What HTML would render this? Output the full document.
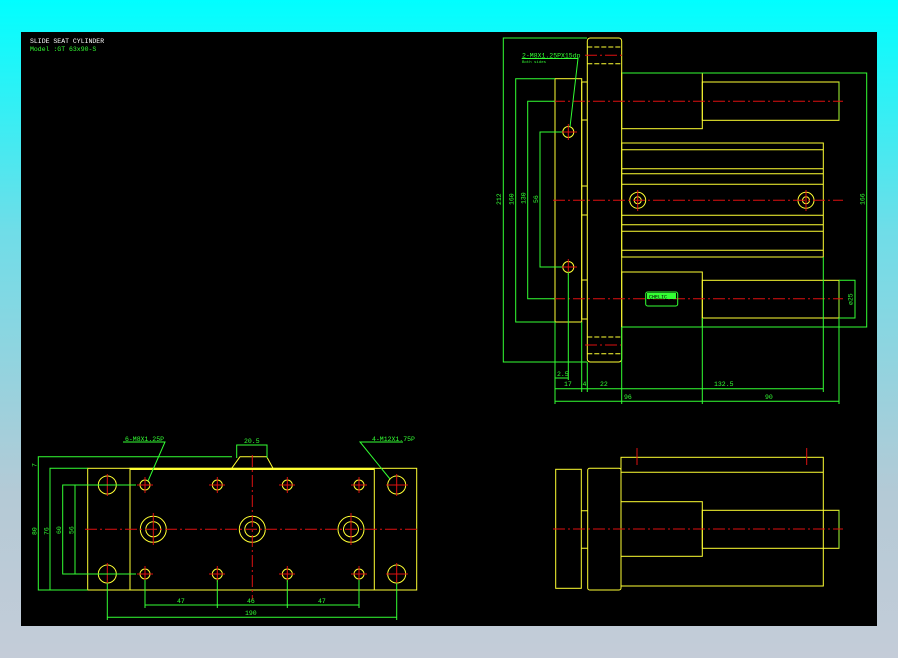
<!DOCTYPE html>
<html><head><meta charset="utf-8"><style>
html,body{margin:0;padding:0;width:898px;height:658px;overflow:hidden;background:linear-gradient(#00ffff 0%,#6fdde8 35%,#b4cad6 75%,#c4ccd8 100%);}
svg{position:absolute;left:0;top:0}
text{font-family:"Liberation Mono",monospace;font-size:6.5px;fill:#33ff33}
</style></head><body>
<svg width="898" height="658" viewBox="0 0 898 658">
<rect x="21" y="32" width="856" height="594" fill="#000"/>
<text x="30" y="43" style="fill:#fff;font-size:6.5px">SLIDE SEAT CYLINDER</text>
<text x="30" y="51">Model :GT 63x90-S</text>

<!-- ===== SIDE VIEW (top right) ===== -->
<g fill="none" stroke="#ffff33" stroke-width="1">
<rect x="587.3" y="38" width="34.4" height="324" rx="3"/>
<rect x="555" y="78.7" width="26.7" height="243.3"/>
<line x1="581.7" y1="82" x2="587.3" y2="82"/><line x1="581.7" y1="120" x2="587.3" y2="120"/>
<line x1="581.7" y1="186" x2="587.3" y2="186"/><line x1="581.7" y1="215" x2="587.3" y2="215"/>
<line x1="581.7" y1="280" x2="587.3" y2="280"/><line x1="581.7" y1="319" x2="587.3" y2="319"/>
<line x1="581.7" y1="82" x2="581.7" y2="319"/>
<rect x="621.7" y="73" width="80.6" height="55.7"/>
<rect x="702.3" y="82" width="136.7" height="38.3"/>
<rect x="621.7" y="143" width="201.6" height="114"/>
<line x1="621.7" y1="149.7" x2="823.3" y2="149.7"/><line x1="621.7" y1="168.7" x2="823.3" y2="168.7"/>
<line x1="621.7" y1="173.7" x2="823.3" y2="173.7"/><line x1="621.7" y1="184.3" x2="823.3" y2="184.3"/>
<line x1="621.7" y1="215.3" x2="823.3" y2="215.3"/><line x1="621.7" y1="224.7" x2="823.3" y2="224.7"/>
<line x1="621.7" y1="231.3" x2="823.3" y2="231.3"/><line x1="621.7" y1="250.3" x2="823.3" y2="250.3"/>
<rect x="621.7" y="272" width="80.6" height="55"/>
<rect x="702.3" y="280.3" width="136.7" height="37.7"/>
<g stroke-dasharray="5 2"><line x1="587.3" y1="47" x2="621.7" y2="47"/><line x1="587.3" y1="63.7" x2="621.7" y2="63.7"/>
<line x1="587.3" y1="337" x2="621.7" y2="337"/><line x1="587.3" y1="353.7" x2="621.7" y2="353.7"/></g>
<circle cx="568.3" cy="132" r="5.5"/><circle cx="568.3" cy="267" r="5.5"/>
<circle cx="637.7" cy="200.3" r="8"/><circle cx="637.7" cy="200.3" r="3.5"/>
<circle cx="806" cy="200.3" r="8"/><circle cx="806" cy="200.3" r="3.5"/>
</g>
<line x1="839" y1="82" x2="839" y2="120" stroke="#aaff33"/><line x1="839" y1="280" x2="839" y2="318" stroke="#aaff33"/>
<g stroke="#dd1111" stroke-width="1" stroke-dasharray="12 3 2 3">
<line x1="553" y1="101.3" x2="843" y2="101.3"/><line x1="553" y1="200.3" x2="843" y2="200.3"/>
<line x1="553" y1="298.7" x2="843" y2="298.7"/>
<line x1="585" y1="55.3" x2="625" y2="55.3"/><line x1="585" y1="345" x2="625" y2="345"/>
</g>
<g stroke="#dd1111"><line x1="560" y1="132" x2="577" y2="132"/><line x1="568.3" y1="124" x2="568.3" y2="140"/>
<line x1="560" y1="267" x2="577" y2="267"/><line x1="568.3" y1="259" x2="568.3" y2="275"/>
<line x1="637.7" y1="190" x2="637.7" y2="211"/><line x1="806" y1="190" x2="806" y2="211"/></g>
<rect x="645.7" y="292" width="32" height="14" rx="2" fill="none" stroke="#33ff33"/>
<rect x="647" y="293" width="29" height="6" fill="#33ff33"/>
<text x="649" y="298.5" style="fill:#000;font-size:5px">CHELIC</text>
<!-- side dims -->
<g fill="none" stroke="#33ff33" stroke-width="1">
<path d="M587 38H503.3V362H587"/>
<path d="M555 78.7H515.7V322H555"/>
<path d="M555 101.3H527.7V298.7H555"/>
<path d="M562 132H540V267H562"/>
<path d="M622 73H866.7V327H622"/>
<path d="M839 280.3H855V318H839"/>
<line x1="555" y1="322" x2="555" y2="404"/><line x1="581.7" y1="322" x2="581.7" y2="392"/>
<line x1="587.3" y1="362" x2="587.3" y2="392"/><line x1="621.7" y1="327" x2="621.7" y2="404"/>
<line x1="702.3" y1="318" x2="702.3" y2="404"/><line x1="823.3" y1="257" x2="823.3" y2="392"/>
<line x1="839" y1="318" x2="839" y2="404"/>
<line x1="568.3" y1="272" x2="568.3" y2="380"/><path d="M555 378H568.3"/>
<line x1="555" y1="388.7" x2="823.3" y2="388.7"/><line x1="555" y1="401.3" x2="839" y2="401.3"/>
<path d="M521.7 58.5H578L570 127"/>
</g>
<text x="522" y="57.5">2-M8X1.25PX15dp</text>
<text x="522" y="63" style="font-size:4px">Both sides</text>
<g style="font-size:6px">
<text transform="translate(501,205) rotate(-90)">212</text>
<text transform="translate(513.5,205) rotate(-90)">160</text>
<text transform="translate(525.5,204) rotate(-90)">130</text>
<text transform="translate(538,203) rotate(-90)">56</text>
<text transform="translate(864.5,205) rotate(-90)">166</text>
<text transform="translate(852.5,305) rotate(-90)">ø25</text>
<text x="557" y="376">2.5</text>
<text x="564" y="386">17</text><text x="582.5" y="386">4</text><text x="600" y="386">22</text>
<text x="714" y="386">132.5</text>
<text x="624" y="399">96</text><text x="765" y="399">90</text>
</g>

<!-- ===== FRONT VIEW (bottom left) ===== -->
<g fill="none" stroke="#ffff33" stroke-width="1">
<rect x="87.7" y="468.3" width="329" height="121.7"/>
<rect x="130" y="468.3" width="244.3" height="121.7"/>
<line x1="130" y1="469" x2="374.3" y2="469" stroke-width="2"/>
<path d="M231.7 468.3L240 456.7H266.7L273 468.3"/>
<circle cx="153.3" cy="529.3" r="13"/><circle cx="153.3" cy="529.3" r="7.5"/>
<circle cx="252.3" cy="529.3" r="13"/><circle cx="252.3" cy="529.3" r="7.5"/>
<circle cx="351" cy="529.3" r="13"/><circle cx="351" cy="529.3" r="7.5"/>
<circle cx="145" cy="485" r="5"/><circle cx="217.3" cy="485" r="5"/><circle cx="287.3" cy="485" r="5"/><circle cx="359" cy="485" r="5"/>
<circle cx="145" cy="574" r="5"/><circle cx="217.3" cy="574" r="5"/><circle cx="287.3" cy="574" r="5"/><circle cx="359" cy="574" r="5"/>
<circle cx="107.3" cy="485" r="9"/><circle cx="396.7" cy="485" r="9"/>
<circle cx="107.3" cy="574" r="9"/><circle cx="396.7" cy="574" r="9"/>
</g>
<g stroke="#dd1111" stroke-width="1">
<line x1="85" y1="529.3" x2="420" y2="529.3" stroke-dasharray="12 3 2 3"/>
<line x1="252.3" y1="455" x2="252.3" y2="600" stroke-dasharray="12 3 2 3"/>
<path d="M137 485h16M145 477v16M209 485h16M217.3 477v16M279 485h16M287.3 477v16M351 485h16M359 477v16"/>
<path d="M137 574h16M145 566v16M209 574h16M217.3 566v16M279 574h16M287.3 566v16M351 574h16M359 566v16"/>
<path d="M96 485h22M107.3 474v22M386 485h22M396.7 474v22M96 574h22M107.3 563v22M386 574h22M396.7 563v22"/>
<path d="M153.3 513v32M351 513v32"/>
</g>
<g fill="none" stroke="#33ff33" stroke-width="1">
<path d="M232 456.7H38.3V590H87.7"/>
<path d="M87.7 468.3H50V590"/>
<path d="M98 485H62.7V574H98"/><path d="M136 485H75V574H136"/>
<line x1="145" y1="580" x2="145" y2="608"/><line x1="217.3" y1="580" x2="217.3" y2="608"/>
<line x1="287.3" y1="580" x2="287.3" y2="608"/><line x1="359" y1="580" x2="359" y2="608"/>
<line x1="107.3" y1="583" x2="107.3" y2="620"/><line x1="396.7" y1="583" x2="396.7" y2="620"/>
<line x1="145" y1="605" x2="359" y2="605"/><line x1="107.3" y1="617.3" x2="396.7" y2="617.3"/>
<path d="M236.7 458V445H267V458"/>
<path d="M123 442H165L148 481"/><path d="M403 442H360L390 479"/>
</g>
<g style="font-size:6px">
<text x="125" y="441">6-M8X1.25P</text><text x="372" y="441">4-M12X1.75P</text>
<text x="244" y="443">20.5</text>
<text transform="translate(36.5,467) rotate(-90)">7</text>
<text transform="translate(36.5,535) rotate(-90)">80</text>
<text transform="translate(48.5,535) rotate(-90)">76</text>
<text transform="translate(61,534) rotate(-90)">60</text>
<text transform="translate(73.5,534) rotate(-90)">56</text>
<text x="177" y="603">47</text><text x="247" y="603">46</text><text x="318" y="603">47</text>
<text x="245" y="615">190</text>
</g>

<!-- ===== BOTTOM RIGHT VIEW ===== -->
<g fill="none" stroke="#ffff33" stroke-width="1">
<rect x="555.7" y="469.3" width="25.6" height="119"/>
<rect x="587.7" y="468.3" width="33.3" height="121.7" rx="2"/>
<path d="M581.3 510.7H587.7M581.3 548.3H587.7"/>
<rect x="621" y="457.3" width="202.3" height="128.7"/>
<line x1="621" y1="472.3" x2="823.3" y2="472.3"/>
<rect x="621" y="501.7" width="81.3" height="54.6"/>
<rect x="702.3" y="510.3" width="136.7" height="38"/>
</g>
<line x1="839" y1="510.3" x2="839" y2="548.3" stroke="#aaff33"/>
<g stroke="#dd1111"><line x1="637" y1="448" x2="637" y2="465"/><line x1="806.7" y1="448" x2="806.7" y2="465"/>
<line x1="553" y1="529" x2="843" y2="529" stroke-dasharray="12 3 2 3"/></g>
</svg>
</body></html>
